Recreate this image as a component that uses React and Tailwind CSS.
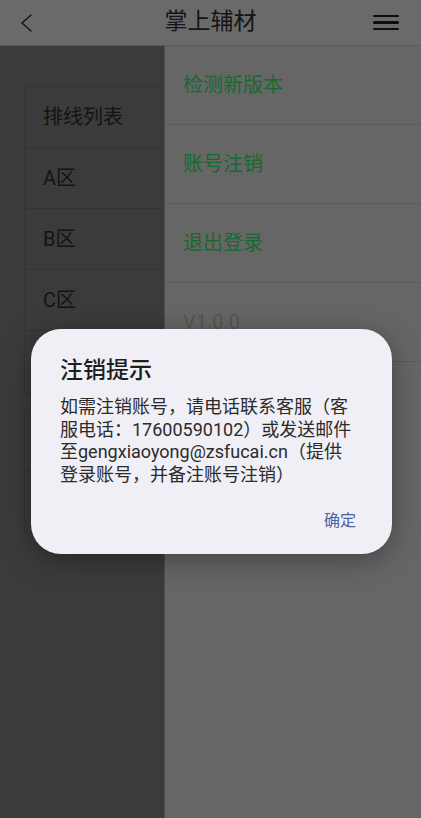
export default function App() {
  const font = { fontFamily: 'Roboto, "Noto Sans CJK SC", sans-serif' };
  const listRows = ["排线列表", "A区", "B区", "C区", "D区"];
  const listRows2 = ["E区", "F区"];
  const menu = [
    { t: "检测新版本", c: "text-[#166a31]" },
    { t: "账号注销", c: "text-[#166a31]" },
    { t: "退出登录", c: "text-[#166a31]" },
    { t: "V1.0.0", c: "text-[#555555]" },
  ];
  return (
    <div
      className="relative w-[421px] h-[818px] overflow-hidden bg-[#3b3b3b]"
      style={font}
    >
      <header className="relative h-[46px] flex items-center justify-between bg-[#6a6a6a] border-b border-[#5b5b5b] pl-[18px] pr-[22px]">
        <svg width="16" height="20" viewBox="0 0 16 20" fill="none">
          <path d="M13 2 L4 10 L13 18" stroke="#161616" strokeWidth="1.5" strokeLinecap="round" strokeLinejoin="round" />
        </svg>
        <div className="absolute left-0 right-0 top-0 h-[45px] flex items-center justify-center text-[23px] text-[#141414] pointer-events-none">
          掌上辅材
        </div>
        <div className="flex flex-col gap-[4.4px] w-[26px]">
          <div className="h-[2.4px] bg-[#0d0d0d] rounded-full" />
          <div className="h-[2.4px] bg-[#0d0d0d] rounded-full" />
          <div className="h-[2.4px] bg-[#0d0d0d] rounded-full" />
        </div>
      </header>

      <main className="pt-[40px] px-[24px] flex flex-col gap-[17px]">
        <div className="border border-[#343434]">
          {listRows.map((r, i) => (
            <div
              key={r}
              className={`h-[61px] flex items-center pl-[18px] text-[20px] text-[#131313] ${i < listRows.length - 1 ? "border-b border-[#343434]" : ""}`}
            >
              {r}
            </div>
          ))}
        </div>
        <div className="border border-[#343434]">
          {listRows2.map((r, i) => (
            <div
              key={r}
              className={`h-[61px] flex items-center pl-[18px] text-[20px] text-[#131313] ${i < listRows2.length - 1 ? "border-b border-[#343434]" : ""}`}
            >
              {r}
            </div>
          ))}
        </div>
      </main>

      <aside className="absolute top-[46px] right-0 bottom-0 w-[257px] bg-[#666666] border-l border-[#4f4f4f]">
        {menu.map((m) => (
          <div
            key={m.t}
            className={`h-[79px] flex items-center pl-[18px] border-b border-[#5c5c5c] text-[20px] ${m.c}`}
          >
            {m.t}
          </div>
        ))}
      </aside>

      <div className="absolute left-[31px] top-[329px] w-[361px] h-[225px] rounded-[30px] bg-[#f0eff5] shadow-[0_6px_28px_rgba(0,0,0,0.35)] pt-[25px] pl-[29px] pr-[36px] flex flex-col">
        <div className="text-[23px] leading-[34px] font-medium text-[#1e1e1e]">注销提示</div>
        <div className="mt-[8px] text-[18px] leading-[22.6px] text-[#2b2b2b] whitespace-nowrap">
          <div>如需注销账号，请电话联系客服（客</div>
          <div>服电话：17600590102）或发送邮件</div>
          <div>至gengxiaoyong@zsfucai.cn（提供</div>
          <div>登录账号，并备注账号注销）</div>
        </div>
        <div className="mt-[24px] flex justify-end">
          <span className="text-[16px] leading-[22px] text-[#4d60a6]">确定</span>
        </div>
      </div>
    </div>
  );
}
